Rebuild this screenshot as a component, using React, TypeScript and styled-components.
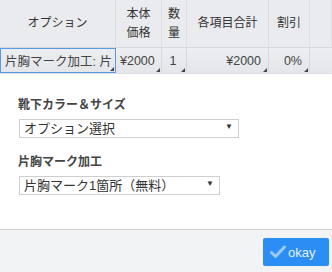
import * as React from 'react';
import styled, { createGlobalStyle } from 'styled-components';

const GlobalStyle = createGlobalStyle`
    html, body {
        margin: 0;
        padding: 0;
        background: #ffffff;
    }
    body {
        font-family: 'Liberation Sans', 'Noto Sans CJK JP', sans-serif;
        color: #333;
    }
`;

const Dialog = styled.div`
    width: 332px;
    height: 272px;
    display: flex;
    flex-direction: column;
    overflow: hidden;
    background: white;
`;

// 表のグリッド
const Grid = styled.div`
    display: grid;
    grid-template-columns: 116px 46px 25px 82px 41px 22px;
    grid-template-rows: 48px 25px;
    background: #e9ebee;
    border-bottom: 1px solid #dcdee2;
`;

const HeadCell = styled.div`
    display: flex;
    align-items: center;
    justify-content: center;
    text-align: center;
    font-size: 12px;
    line-height: 19px;
    color: #333;
    border-right: 1px solid #dcdee2;
    border-bottom: 1px solid #d6d8dc;
    box-sizing: border-box;
    &:last-child {
        border-right: none;
    }
`;

const DataCell = styled.div<{ $align?: string; $active?: boolean }>`
    position: relative;
    display: flex;
    align-items: center;
    justify-content: ${p => (p.$align === 'right' ? 'flex-end' : 'flex-start')};
    padding: 0 ${p => (p.$align === 'right' ? '7px' : '4px')};
    font-size: 12.5px;
    color: #444;
    white-space: nowrap;
    overflow: hidden;
    box-sizing: border-box;
    background: linear-gradient(#ebedf0, #e4e6ea);
    border-right: 1px solid #d6d8dc;
    ${p => (p.$active ? 'border: 1px solid #5a9ae0; padding-left: 4px;' : '')}
    &::after {
        content: '';
        position: absolute;
        right: 1px;
        bottom: 1px;
        border-left: 4px solid transparent;
        border-bottom: 4px solid #444;
    }
`;

const EmptyCell = styled.div`
    background: linear-gradient(#ebedf0, #e4e6ea);
`;

// 本文
const Body = styled.div`
    flex: 1;
    display: flex;
    flex-direction: column;
    padding: 23px 0 0 18px;
`;

const Label = styled.div`
    font-size: 12px;
    font-weight: bold;
    color: #444;
    line-height: 16px;
    margin-bottom: 6px;
`;

const SelectBox = styled.div<{ $width: number }>`
    position: relative;
    width: ${p => p.$width}px;
    height: 19px;
    margin-left: 1px;
    margin-bottom: 16px;
    &::after {
        content: '▼';
        position: absolute;
        right: 6px;
        top: 3px;
        font-size: 8px;
        color: #333;
        pointer-events: none;
    }
`;

const Select = styled.select`
    appearance: none;
    width: 100%;
    height: 19px;
    box-sizing: border-box;
    border: 1px solid #cfcfcf;
    border-radius: 0;
    background: white;
    padding: 0 0 0 4px;
    font-family: 'Liberation Sans', 'Noto Sans CJK JP', sans-serif;
    font-size: 13px;
    line-height: 17px;
    color: #333;
    outline: none;
`;

// フッター
const Footer = styled.div`
    height: 43px;
    box-sizing: border-box;
    border-top: 1px solid #cccccc;
    background: #f2f3f5;
    display: flex;
    align-items: center;
    justify-content: flex-end;
    padding: 0 3px 0 0;
`;

const OkButton = styled.button`
    display: flex;
    align-items: center;
    gap: 2px;
    width: 66px;
    height: 28px;
    border: none;
    border-radius: 2px;
    background: #2b8ef5;
    color: #e6f1ff;
    font-family: 'Liberation Sans', sans-serif;
    font-size: 13px;
    padding: 0 0 0 7px;
    margin-top: 2px;
`;

const Check = () => (
    <svg width="16" height="14" viewBox="0 0 16 14">
        <path d="M1.5 7.5 L5.5 11.5 L14.5 2" fill="none" stroke="#9ccbfb" strokeWidth="3" strokeLinecap="round" strokeLinejoin="round" />
    </svg>
);

const App: React.FC = () => (
    <Dialog>
        <GlobalStyle />
        <Grid>
            <HeadCell>オプション</HeadCell>
            <HeadCell>本体<br />価格</HeadCell>
            <HeadCell>数<br />量</HeadCell>
            <HeadCell>各項目合計</HeadCell>
            <HeadCell>割引</HeadCell>
            <HeadCell />
            <DataCell $active>片胸マーク加工: 片</DataCell>
            <DataCell>¥2000</DataCell>
            <DataCell>&nbsp;1</DataCell>
            <DataCell $align="right">¥2000</DataCell>
            <DataCell $align="right">0%</DataCell>
            <EmptyCell />
        </Grid>
        <Body>
            <Label>靴下カラー＆サイズ</Label>
            <SelectBox $width={220}>
                <Select defaultValue="">
                    <option value="">オプション選択</option>
                </Select>
            </SelectBox>
            <Label>片胸マーク加工</Label>
            <SelectBox $width={201}>
                <Select defaultValue="1">
                    <option value="1">片胸マーク1箇所（無料）</option>
                </Select>
            </SelectBox>
        </Body>
        <Footer>
            <OkButton>
                <Check />
                okay
            </OkButton>
        </Footer>
    </Dialog>
);

export default App;
